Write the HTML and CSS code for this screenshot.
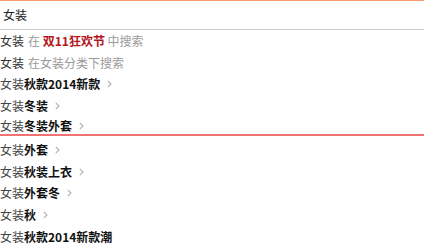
FILE: index.html
```html
<!DOCTYPE html>
<html lang="zh">
<head>
<meta charset="utf-8">
<link rel="stylesheet" href="styles.css">
</head>
<body>
<div class="suggest">
  <div class="query">女装</div>
  <ul class="list">
    <li class="row"><span class="key">女装</span><span class="tip">在 <em class="hot">双11狂欢节</em> 中搜索</span></li>
    <li class="row"><span class="key">女装</span><span class="tip">在女装分类下搜索</span></li>
    <li class="row">女装<b>秋款2014新款</b><svg class="chev" width="5" height="8" viewBox="0 0 5 8"><polyline points="0.8,0.8 4,4 0.8,7.2"/></svg></li>
    <li class="row">女装<b>冬装</b><svg class="chev" width="5" height="8" viewBox="0 0 5 8"><polyline points="0.8,0.8 4,4 0.8,7.2"/></svg></li>
    <li class="row row-active">女装<b>冬装外套</b><svg class="chev" width="5" height="8" viewBox="0 0 5 8"><polyline points="0.8,0.8 4,4 0.8,7.2"/></svg></li>
    <li class="row">女装<b>外套</b><svg class="chev" width="5" height="8" viewBox="0 0 5 8"><polyline points="0.8,0.8 4,4 0.8,7.2"/></svg></li>
    <li class="row">女装<b>秋装上衣</b><svg class="chev" width="5" height="8" viewBox="0 0 5 8"><polyline points="0.8,0.8 4,4 0.8,7.2"/></svg></li>
    <li class="row">女装<b>外套冬</b><svg class="chev" width="5" height="8" viewBox="0 0 5 8"><polyline points="0.8,0.8 4,4 0.8,7.2"/></svg></li>
    <li class="row">女装<b>秋</b><svg class="chev" width="5" height="8" viewBox="0 0 5 8"><polyline points="0.8,0.8 4,4 0.8,7.2"/></svg></li>
    <li class="row">女装<b>秋款2014新款潮</b></li>
  </ul>
</div>
</body>
</html>
```

FILE: styles.css
```css
html, body {
  margin: 0;
  padding: 0;
  background: #fff;
}
body {
  font-family: "Noto Sans CJK SC", "Noto Sans", sans-serif;
  font-size: 12px;
  color: #333;
  overflow: hidden;
}
.suggest {
  width: 424px;
}
.query {
  height: 28px;
  border-top: 1px solid #fa9c73;
  border-bottom: 1px solid #cccccc;
  padding-left: 3px;
  display: flex;
  align-items: center;
  color: #222;
  line-height: 1;
}
.list {
  list-style: none;
  margin: 0;
  padding: 0;
}
.row {
  height: 21.75px;
  display: flex;
  align-items: center;
  line-height: 1;
  white-space: nowrap;
  color: #444;
}
.row b {
  font-weight: 700;
  color: #111;
}
.key {
  color: #333;
}
.tip {
  color: #9a9a9a;
  margin-left: 4px;
  white-space: pre;
}
.hot {
  font-style: normal;
  font-weight: 700;
  color: #b3141b;
}
.chev {
  margin-left: 7px;
  fill: none;
  stroke: #b0b0b0;
  stroke-width: 1.1;
}
.row-active {
  height: 17px;
  border-bottom: 2px solid #f07272;
  margin-bottom: 3px;
}
```
